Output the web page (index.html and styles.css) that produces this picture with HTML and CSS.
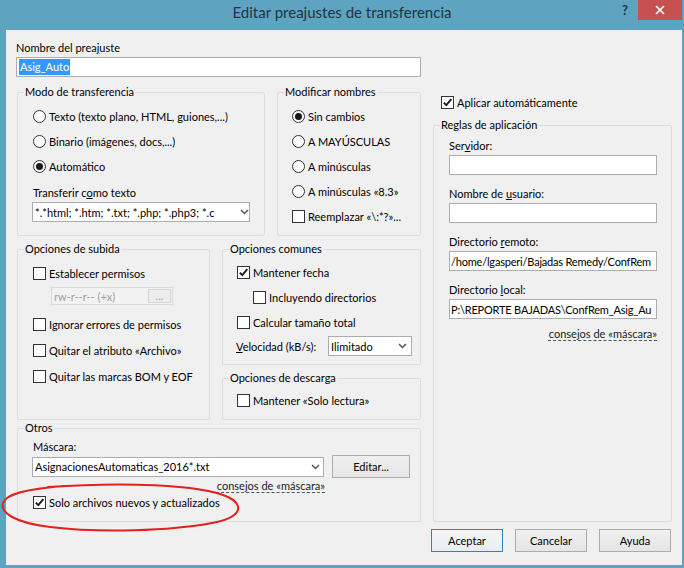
FILE: index.html
```html
<!DOCTYPE html>
<html lang="es">
<head>
<meta charset="utf-8">
<title>Editar preajustes de transferencia</title>
<link rel="stylesheet" href="styles.css">
</head>
<body>
<div class="window">
  <div class="titlebar">
    <div class="title">Editar preajustes de transferencia</div>
    <div class="caption">
      <span class="help">?</span>
      <span class="close"><svg width="10" height="10" viewBox="0 0 10 10"><path d="M1 1L9 9M9 1L1 9" stroke="#fff" stroke-width="1.7"/></svg></span>
    </div>
  </div>

  <div class="client">
    <div class="lbl">Nombre del prea<u>j</u>uste</div>
    <div class="input name"><span class="sel">Asig_Auto</span></div>

    <div class="main">
      <div class="left">
        <div class="rowA">
          <fieldset class="grp modo">
            <legend>Modo de transferencia</legend>
            <div class="gbody">
              <div class="opt"><span class="radio"></span>Texto (texto plano, HTML, guiones,...)</div>
              <div class="opt"><span class="radio"></span>Binario (imágenes, docs,...)</div>
              <div class="opt"><span class="radio on"></span>Automático</div>
              <div class="lbl sp6">Transferir c<u>o</u>mo texto</div>
              <div class="combo tcombo">
                <span class="txt">*.*html; *.htm; *.txt; *.php; *.php3; *.c</span>
                <span class="arr a0"><svg width="9" height="6" viewBox="0 0 9 6"><path d="M1 1L4.5 4.5L8 1" fill="none" stroke="#555" stroke-width="1.5"/></svg></span>
              </div>
            </div>
          </fieldset>
          <fieldset class="grp modif">
            <legend>Modificar nombres</legend>
            <div class="gbody">
              <div class="opt"><span class="radio on"></span>Sin cambios</div>
              <div class="opt"><span class="radio"></span>A MAYÚSCULAS</div>
              <div class="opt"><span class="radio"></span>A minúsculas</div>
              <div class="opt"><span class="radio"></span>A minúsculas «8.3»</div>
              <div class="opt"><span class="chk"></span>Reemplazar «\:*?»...</div>
            </div>
          </fieldset>
        </div>

        <div class="rowB">
          <fieldset class="grp subida">
            <legend>Opciones de subida</legend>
            <div class="gbody">
              <div class="opt r26"><span class="chk"></span>Establecer permisos</div>
              <div class="perm"><span class="ptxt">rw-r--r-- (+x)</span><span class="pbtn">...</span></div>
              <div class="opt r26 sp6"><span class="chk"></span>Ignorar errores de permisos</div>
              <div class="opt r26"><span class="chk"></span>Quitar el atributo «Archivo»</div>
              <div class="opt r26"><span class="chk"></span>Quitar las marcas BOM y EOF</div>
            </div>
          </fieldset>
          <div class="colB">
            <fieldset class="grp comunes">
              <legend>Opciones comunes</legend>
              <div class="gbody">
                <div class="opt"><span class="chk on"><svg width="11" height="11" viewBox="0 0 11 11"><path d="M1.8 5.6L4.3 8.2L9.3 2.2" fill="none" stroke="#1a1a1a" stroke-width="1.9"/></svg></span>Mantener fecha</div>
                <div class="opt ind"><span class="chk"></span>Incluyendo directorios</div>
                <div class="opt"><span class="chk"></span>Calcular tamaño total</div>
                <div class="vrow">
                  <span><u>V</u>elocidad (kB/s):</span>
                  <div class="combo vcombo">
                    <span class="txt">Ilimitado</span>
                    <span class="arr a5"><svg width="9" height="6" viewBox="0 0 9 6"><path d="M1 1L4.5 4.5L8 1" fill="none" stroke="#555" stroke-width="1.5"/></svg></span>
                  </div>
                </div>
              </div>
            </fieldset>
            <fieldset class="grp descarga">
              <legend>Opciones de descarga</legend>
              <div class="gbody">
                <div class="opt"><span class="chk"></span>Mantener «Solo lectura»</div>
              </div>
            </fieldset>
          </div>
        </div>

        <fieldset class="grp otros">
          <legend>Otros</legend>
          <div class="gbody">
            <div class="lbl">Máscara:</div>
            <div class="mrow">
              <div class="combo mcombo">
                <span class="txt">AsignacionesAutomaticas_2016*.txt</span>
                <span class="arr a3"><svg width="9" height="6" viewBox="0 0 9 6"><path d="M1 1L4.5 4.5L8 1" fill="none" stroke="#555" stroke-width="1.5"/></svg></span>
              </div>
              <span class="btn edit">Editar...</span>
            </div>
            <div class="linkrow mlink"><span class="link">consejos de «máscara»</span></div>
            <div class="opt r16"><span class="chk on"><svg width="11" height="11" viewBox="0 0 11 11"><path d="M1.8 5.6L4.3 8.2L9.3 2.2" fill="none" stroke="#1a1a1a" stroke-width="1.9"/></svg></span>Solo archivos nuevos y actualizados</div>
          </div>
        </fieldset>
      </div>

      <div class="right">
        <div class="opt aplicar"><span class="chk on"><svg width="11" height="11" viewBox="0 0 11 11"><path d="M1.8 5.6L4.3 8.2L9.3 2.2" fill="none" stroke="#1a1a1a" stroke-width="1.9"/></svg></span>Aplicar automáticamente</div>
        <fieldset class="grp reglas">
          <legend>Reglas de aplicación</legend>
          <div class="gbody">
            <div class="lbl">Ser<u>v</u>idor:</div>
            <div class="input"></div>
            <div class="lbl sp11">Nombre de <u>u</u>suario:</div>
            <div class="input"></div>
            <div class="lbl sp11">Directorio <u>r</u>emoto:</div>
            <div class="input"><span class="itxt">/home/lgasperi/Bajadas Remedy/ConfRem</span></div>
            <div class="lbl sp11">Directorio <u>l</u>ocal:</div>
            <div class="input"><span class="itxt">P:\REPORTE BAJADAS\ConfRem_Asig_Au</span></div>
            <div class="linkrow rlink"><span class="link">consejos de «máscara»</span></div>
          </div>
        </fieldset>
      </div>
    </div>

    <div class="btns">
      <span class="btn def">Aceptar</span>
      <span class="btn">Cancelar</span>
      <span class="btn">Ayuda</span>
    </div>
  </div>

  <svg class="mark" width="250" height="60" viewBox="0 480 250 60">
    <path d="M48 487 C120 482, 200 484, 228 497 C246 506, 240 518, 212 523 C170 531, 100 533, 50 527 C16 523, 0 513, 3 503 C6 494, 26 489, 64 486" fill="none" stroke="#e3201c" stroke-width="2" stroke-linecap="round"/>
  </svg>
</div>
</body>
</html>
```

FILE: styles.css
```css
* { box-sizing: border-box; }
html, body { margin: 0; padding: 0; }
body {
  background: #5ea4c0;
  font-family: Lato, "Liberation Sans", sans-serif;
  font-size: 11px;
  color: #000;
}
.window {
  position: relative;
  width: 684px;
  height: 568px;
  background: #5ea4c0;
  overflow: hidden;
}
.titlebar {
  height: 30px;
  display: grid;
  grid-template-columns: 1fr auto 1fr;
  align-items: start;
}
.title {
  grid-column: 2;
  font-size: 15px;
  line-height: 25px;
  color: #1f3444;
  white-space: nowrap;
}
.caption {
  grid-column: 3;
  justify-self: end;
  display: flex;
  margin-right: 2px;
}
.help {
  width: 26px;
  height: 20px;
  display: flex;
  align-items: center;
  justify-content: center;
  font-weight: bold;
  font-size: 13px;
  color: #1d3546;
}
.close {
  width: 44px;
  height: 20px;
  background: #c75050;
  display: flex;
  align-items: center;
  justify-content: center;
}
.client {
  margin-left: 6px;
  width: 676px;
  height: 535px;
  background: #f0f0f0;
  padding: 10px 10px 0 10px;
}
.lbl { line-height: 16px; height: 16px; white-space: nowrap; }
.sp6 { margin-top: 6px; }
.sp11 { margin-top: 11px; }
u { text-underline-offset: 1px; }

.input {
  height: 20px;
  margin-top: 1px;
  border: 1px solid #abadb3;
  background: #fff;
  display: flex;
  align-items: center;
  overflow: hidden;
  white-space: nowrap;
}
.input.name { width: 405px; }
.sel {
  background: #3399ff;
  color: #fff;
  line-height: 16px;
  padding: 0 1px;
  margin-left: 2px;
}
.itxt { padding-left: 1px; letter-spacing: -0.2px; }

.main {
  display: flex;
  gap: 12px;
  margin-top: 7px;
  margin-left: 1px;
}
.left { width: 404px; display: flex; flex-direction: column; }
.rowA { display: flex; gap: 12px; }
.rowB { display: flex; gap: 12px; margin-top: 5px; }
.colB { display: flex; flex-direction: column; gap: 5px; width: 199px; }
.otros { margin-top: 4px; }

.grp {
  margin: 0;
  padding: 0;
  border: 1px solid #dcdcdc;
  border-radius: 2px;
  min-width: 0;
}
.grp legend {
  margin-left: 6px;
  padding: 0 1px;
  line-height: 16px;
  font-size: 11px;
  white-space: nowrap;
}
.modo { width: 248px; }
.modo .gbody { padding: 4px 14px 13px 15px; }
.modif { width: 144px; }
.modif .gbody { padding: 4px 4px 6px 14px; }
.subida { width: 193px; }
.subida .gbody { padding: 3px 8px 6px 15px; }
.comunes .gbody { padding: 3px 8px 8px 14px; }
.descarga .gbody { padding: 2px 8px 6px 14px; }
.otros .gbody { padding: 3px 10px 11px 15px; }

.opt {
  display: flex;
  align-items: center;
  height: 25px;
  white-space: nowrap;
}
.opt.r26 { height: 26px; }
.opt.r16 { height: 16px; }
.opt.ind { padding-left: 16px; }

.radio {
  flex: none;
  width: 13px;
  height: 13px;
  border: 1px solid #333;
  border-radius: 50%;
  background: #fff;
  margin-right: 3px;
  display: flex;
  align-items: center;
  justify-content: center;
}
.radio.on::after {
  content: "";
  width: 7px;
  height: 7px;
  border-radius: 50%;
  background: #1a1a1a;
}
.chk {
  flex: none;
  width: 13px;
  height: 13px;
  border: 1px solid #333;
  background: #fff;
  margin-right: 3px;
  display: flex;
}
.chk svg { display: block; }

.combo {
  height: 20px;
  border: 1px solid #abadb3;
  background: #fff;
  display: flex;
  align-items: center;
  white-space: nowrap;
}
.combo .txt { flex: 1; overflow: hidden; padding-left: 2px; }
.combo .arr {
  flex: none;
  width: 16px;
  display: flex;
  justify-content: flex-end;
  padding-right: 3px;
}
.combo .arr svg { display: block; }
.combo .arr.a0 { width: 12px; padding-right: 0; }
.combo .arr.a5 { padding-right: 4px; }
.tcombo { margin-top: 1px; margin-left: -1px; width: 218px; }
.vcombo { width: 84px; margin-left: auto; }
.mcombo { width: 293px; margin-left: -1px; }

.perm {
  margin-top: 1px;
  margin-left: 18px;
  width: 122px;
  height: 18px;
  border: 1px solid #d9d9d9;
  background: #f2f2f2;
  display: flex;
  align-items: center;
  padding-right: 1px;
  color: #a0a0a0;
}
.ptxt { flex: 1; padding-left: 2px; white-space: nowrap; }
.pbtn {
  width: 23px;
  height: 14px;
  border: 1px solid #d5d5d5;
  background: #ececec;
  font-size: 11px;
  line-height: 11px;
  text-align: center;
  color: #a8a8a8;
}

.vrow {
  margin-top: 1px;
  height: 20px;
  display: flex;
  align-items: center;
  white-space: nowrap;
  margin-left: -1px;
}

.mrow { display: flex; align-items: center; height: 23px; }
.btn {
  display: flex;
  align-items: center;
  justify-content: center;
  height: 23px;
  border: 1px solid #acacac;
  background: linear-gradient(#f0f0f0, #e5e5e5);
  color: #000;
  white-space: nowrap;
}
.btn.edit { width: 78px; margin-left: 8px; }
.btn.def { border-color: #3c7fb1; background: linear-gradient(#f3f6f9, #e9edf1); }

.linkrow { line-height: 16px; height: 16px; text-align: right; white-space: nowrap; }
.mlink { width: 292px; }
.rlink { margin-top: 7px; }
.link {
  color: #222;
  text-decoration: underline dashed #555;
  text-decoration-thickness: 1px;
  text-underline-offset: 2px;
}

.right { width: 239px; display: flex; flex-direction: column; }
.aplicar { margin-top: 10px; margin-left: 8px; height: 17px; }
.reglas { margin-top: 6px; flex: 1; }
.reglas .gbody { padding: 5px 14px 0 15px; }

.btns {
  display: flex;
  justify-content: flex-end;
  gap: 12px;
  margin-top: 7px;
  margin-right: 1px;
}
.btns .btn { width: 72px; }

.mark {
  position: absolute;
  left: 0;
  top: 480px;
  pointer-events: none;
}
```
